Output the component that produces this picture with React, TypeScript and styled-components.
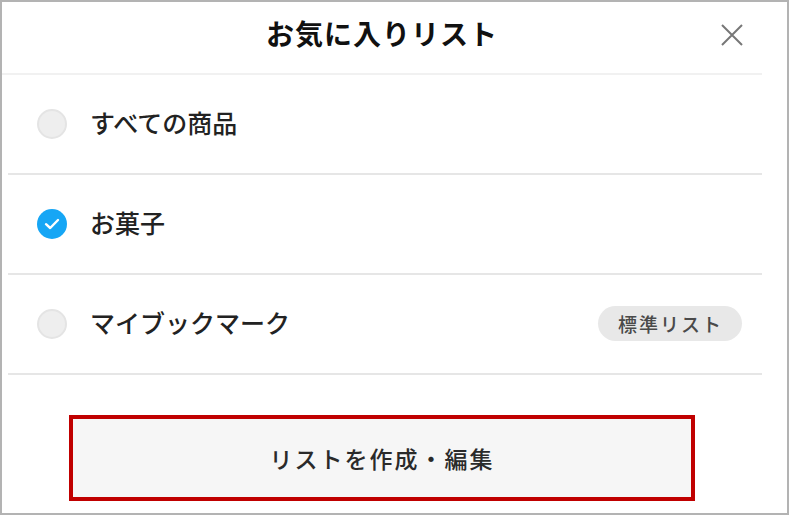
import * as React from "react"
import styled, { createGlobalStyle } from "styled-components"

const GlobalStyle = createGlobalStyle`
  html, body {
    margin: 0;
    padding: 0;
    background: #ffffff;
  }
  body {
    font-family: "Noto Sans CJK JP", "Noto Sans", sans-serif;
    color: #222222;
  }
`

const Panel = styled.div`
  width: 789px;
  height: 515px;
  box-sizing: border-box;
  border: 2px solid #b3b3b3;
  background: #ffffff;
  overflow: hidden;
`

const Content = styled.div`
  width: 760px;
  display: flex;
  flex-direction: column;
`

const Header = styled.header`
  height: 71px;
  display: grid;
  grid-template-columns: 1fr auto 1fr;
  align-items: center;
  border-bottom: 2px solid #f1f1f1;
`

const Title = styled.h1`
  grid-column: 2;
  margin: 0;
  font-size: 28px;
  font-weight: 700;
  letter-spacing: 1px;
  line-height: 1;
  padding-bottom: 10px;
  color: #111111;
`

const CloseButton = styled.button`
  grid-column: 3;
  justify-self: end;
  margin-right: 17px;
  margin-bottom: 6px;
  width: 26px;
  height: 26px;
  padding: 0;
  border: none;
  background: none;
  display: flex;
  align-items: center;
  justify-content: center;
  cursor: pointer;
`

const List = styled.ul`
  list-style: none;
  margin: 0;
  padding: 0;
`

const Row = styled.li`
  height: 98px;
  margin-left: 6px;
  padding: 0 20px 0 29px;
  display: flex;
  align-items: center;
  border-bottom: 2px solid #e6e6e6;
`

const Radio = styled.span<{ $checked?: boolean }>`
  width: 30px;
  height: 30px;
  border-radius: 50%;
  box-sizing: border-box;
  flex-shrink: 0;
  display: flex;
  align-items: center;
  justify-content: center;
  background: ${p => (p.$checked ? "#16a6f5" : "#eeeeee")};
  border: ${p => (p.$checked ? "none" : "2px solid #e4e4e4")};
`

const Label = styled.span`
  margin-left: 23px;
  font-size: 25px;
  font-weight: 500;
  line-height: 1;
  padding-bottom: 4px;
  flex: 1;
`

const Badge = styled.span`
  height: 35px;
  padding: 0 19px 0 20px;
  border-radius: 18px;
  background: #e8e8e8;
  color: #4a4a4a;
  font-size: 19px;
  font-weight: 500;
  letter-spacing: 2px;
  display: flex;
  align-items: center;
  margin-bottom: 2px;
`

const Footer = styled.div`
  display: flex;
  justify-content: center;
  padding-top: 40px;
`

const EditButton = styled.button`
  width: 626px;
  height: 86px;
  box-sizing: border-box;
  border: 4px solid #c00000;
  background: #f6f6f6;
  font-family: inherit;
  font-size: 23px;
  font-weight: 500;
  letter-spacing: 2px;
  color: #2a2a2a;
  cursor: pointer;
`

const CheckMark = () => (
  <svg width="16" height="12" viewBox="0 0 16 12" fill="none">
    <path d="M2 6.2 L6.2 10 L14 2" stroke="#ffffff" strokeWidth="2.4" strokeLinecap="round" strokeLinejoin="round" />
  </svg>
)

const CloseIcon = () => (
  <svg width="24" height="24" viewBox="0 0 24 24" fill="none">
    <path d="M2 2 L22 22 M22 2 L2 22" stroke="#777777" strokeWidth="2" />
  </svg>
)

type Item = { name: string; checked?: boolean; badge?: string }

const items: Item[] = [
  { name: "すべての商品" },
  { name: "お菓子", checked: true },
  { name: "マイブックマーク", badge: "標準リスト" },
]

export default function App() {
  return (
    <>
      <GlobalStyle />
      <Panel>
        <Content>
          <Header>
            <Title>お気に入りリスト</Title>
            <CloseButton aria-label="閉じる">
              <CloseIcon />
            </CloseButton>
          </Header>
          <List>
            {items.map(item => (
              <Row key={item.name}>
                <Radio $checked={item.checked}>{item.checked && <CheckMark />}</Radio>
                <Label>{item.name}</Label>
                {item.badge && <Badge>{item.badge}</Badge>}
              </Row>
            ))}
          </List>
          <Footer>
            <EditButton>リストを作成・編集</EditButton>
          </Footer>
        </Content>
      </Panel>
    </>
  )
}
